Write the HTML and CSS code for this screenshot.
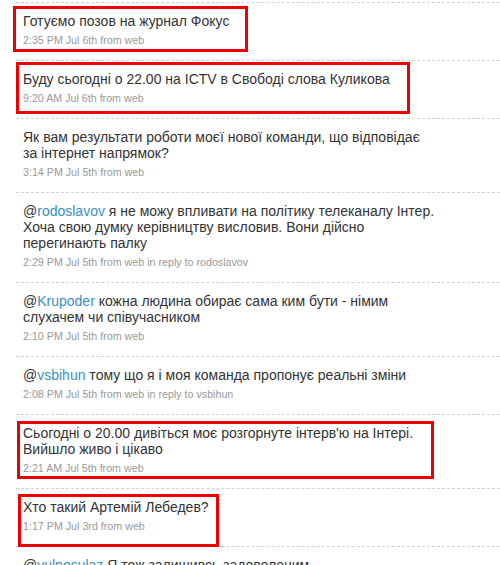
FILE: index.html
```html
<!DOCTYPE html>
<html lang="uk">
<head>
<meta charset="utf-8">
<title>Timeline</title>
<link rel="stylesheet" href="styles.css">
</head>
<body>
<div class="page">
  <ol class="timeline">
    <li class="status">
      <p class="entry">Готуємо позов на журнал Фокус</p>
      <p class="meta">2:35 PM Jul 6th from web</p>
    </li>
    <li class="status">
      <p class="entry">Буду сьогодні о 22.00 на ICTV в Свободі слова Куликова</p>
      <p class="meta">9:20 AM Jul 6th from web</p>
    </li>
    <li class="status">
      <p class="entry">Як вам результати роботи моєї нової команди, що відповідає<br>за інтернет напрямок?</p>
      <p class="meta">3:14 PM Jul 5th from web</p>
    </li>
    <li class="status">
      <p class="entry">@<a class="user" href="#">rodoslavov</a> я не можу впливати на політику телеканалу Інтер.<br>Хоча свою думку керівництву висловив. Вони дійсно<br>перегинають палку</p>
      <p class="meta">2:29 PM Jul 5th from web in reply to rodoslavov</p>
    </li>
    <li class="status">
      <p class="entry">@<a class="user" href="#">Krupoder</a> кожна людина обирає сама ким бути - німим<br>слухачем чи співучасником</p>
      <p class="meta">2:10 PM Jul 5th from web</p>
    </li>
    <li class="status">
      <p class="entry">@<a class="user" href="#">vsbihun</a> тому що я і моя команда пропонує реальні зміни</p>
      <p class="meta">2:08 PM Jul 5th from web in reply to vsbihun</p>
    </li>
    <li class="status">
      <p class="entry">Сьогодні о 20.00 дивіться моє розгорнуте інтерв'ю на Інтері.<br>Вийшло живо і цікаво</p>
      <p class="meta">2:21 AM Jul 5th from web</p>
    </li>
    <li class="status">
      <p class="entry">Хто такий Артемій Лебедев?</p>
      <p class="meta">1:17 PM Jul 3rd from web</p>
    </li>
    <li class="status">
      <p class="entry">@<a class="user" href="#">vulposulaz</a> Я теж залишивсь задоволеним</p>
      <p class="meta">1:02 PM Jul 3rd from web</p>
    </li>
  </ol>
  <div class="mark mark-1"></div>
  <div class="mark mark-2"></div>
  <div class="mark mark-3"></div>
  <div class="mark mark-4"></div>
</div>
</body>
</html>
```

FILE: styles.css
```css
html, body {
  margin: 0;
  padding: 0;
  background: #ffffff;
}

body {
  font-family: "Liberation Sans", Arial, sans-serif;
  color: #333333;
  overflow: hidden;
}

.page {
  position: relative;
  width: 500px;
  height: 565px;
  overflow: hidden;
}

.timeline {
  list-style: none;
  margin: 2px 0 0 16px;
  padding: 0;
  border-top: 1px dashed #d2d2d2;
}

.status {
  padding: 10px 0 13px 7px;
  border-bottom: 1px dashed #d2d2d2;
}

.entry {
  margin: 0;
  width: 460px;
  font-size: 14px;
  line-height: 16px;
  color: #333333;
}

.user {
  color: #3a8fc2;
  text-decoration: none;
}

.meta {
  margin: 4px 0 0;
  font-size: 10.7px;
  line-height: 14px;
  color: #999999;
}

.mark {
  position: absolute;
  box-sizing: border-box;
  border: 3px solid #ee0000;
}

.mark-1 { left: 13px; top: 6px;   width: 235px; height: 46px; }
.mark-2 { left: 16px; top: 62px;  width: 394px; height: 52px; }
.mark-3 { left: 17px; top: 421px; width: 417px; height: 58px; }
.mark-4 { left: 18px; top: 494px; width: 201px; height: 53px; }
```
